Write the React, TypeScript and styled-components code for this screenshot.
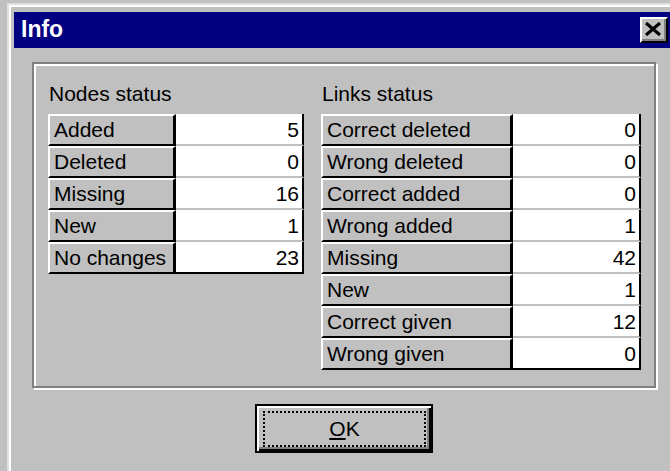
import React from "react";
import styled, { createGlobalStyle } from "styled-components";

const GlobalStyle = createGlobalStyle`
  html, body {
    margin: 0;
    padding: 0;
    background: #c0c0c0;
    overflow: hidden;
  }
  body {
    font-family: "Liberation Sans", Arial, sans-serif;
    color: #000;
  }
`;

const Window = styled.div`
  width: 670px;
  margin: 3px 0 0 7px;
  border-top: 2px solid #dfdfdf;
  border-left: 2px solid #dfdfdf;
`;

const WindowFrame = styled.div`
  border-top: 2px solid #ffffff;
  border-left: 2px solid #ffffff;
  padding: 5px 0 0 3px;
  height: 480px;
`;

const TitleBar = styled.div`
  height: 36px;
  width: 660px;
  background: #000080;
  display: flex;
  justify-content: space-between;
  align-items: flex-start;
  padding-left: 7px;
  box-sizing: border-box;
`;

const Title = styled.span`
  color: #fff;
  font-weight: bold;
  font-size: 23px;
  line-height: 34px;
`;

const CloseButton = styled.div`
  width: 28px;
  height: 26px;
  margin: 5px 6px 0 0;
  box-sizing: border-box;
  background: #c0c0c0;
  border-top: 2px solid #fff;
  border-left: 2px solid #fff;
  border-right: 2px solid #000;
  border-bottom: 2px solid #000;
  box-shadow: inset -2px -2px 0 #808080;
  display: flex;
  align-items: center;
  justify-content: center;
  padding: 0 2px 2px 0;
`;

const Client = styled.div`
  width: 660px;
  display: flex;
  flex-direction: column;
  align-items: center;
  padding-top: 14px;
`;

const GroupBox = styled.div`
  width: 624px;
  box-sizing: border-box;
  border: 2px solid #808080;
  box-shadow: 2px 2px 0 #fff, inset 2px 2px 0 #fff;
  padding: 16px 0 16px 14px;
  display: grid;
  grid-template-columns: 256px 320px;
  column-gap: 17px;
  align-items: start;
`;

const Section = styled.div`
  display: flex;
  flex-direction: column;
  gap: 6px;
`;

const SectionTitle = styled.div`
  font-size: 21px;
  line-height: 28px;
  padding-left: 1px;
`;

const StatusGrid = styled.div<{ $label: number; $value: number }>`
  display: grid;
  grid-template-columns: ${(p) => p.$label}px ${(p) => p.$value}px;
  font-size: 21px;
`;

const LabelCell = styled.div`
  background: #c0c0c0;
  border-top: 2px solid #fff;
  border-left: 2px solid #fff;
  border-bottom: 2px solid #000;
  border-right: 3px solid #000;
  padding-left: 4px;
  line-height: 28px;
  white-space: nowrap;
  overflow: hidden;
`;

const ValueCell = styled.div<{ $last: boolean }>`
  background: #fff;
  border-right: 2px solid #000;
  border-bottom: 2px solid ${(p) => (p.$last ? "#000" : "#c0c0c0")};
  padding: 2px 3px 0 0;
  line-height: 28px;
  text-align: right;
`;

const OkButton = styled.div`
  margin-top: 16px;
  width: 178px;
  height: 49px;
  box-sizing: border-box;
  border: 2px solid #000;
  background: #c0c0c0;
  box-shadow: inset 2px 2px 0 #fff, inset -2px -2px 0 #000,
    inset -4px -4px 0 #808080;
  padding: 5px 5px 4px 6px;
  display: flex;
`;

const FocusRing = styled.div`
  flex: 1;
  border: 2px dotted #000;
  display: flex;
  align-items: center;
  justify-content: center;
  font-size: 21px;
  line-height: 32px;
`;

const Mnemonic = styled.span`
  text-decoration: underline;
  text-decoration-thickness: 2px;
  text-underline-offset: 2px;
`;

type Row = [string, number];

const nodes: Row[] = [
  ["Added", 5],
  ["Deleted", 0],
  ["Missing", 16],
  ["New", 1],
  ["No changes", 23],
];

const links: Row[] = [
  ["Correct deleted", 0],
  ["Wrong deleted", 0],
  ["Correct added", 0],
  ["Wrong added", 1],
  ["Missing", 42],
  ["New", 1],
  ["Correct given", 12],
  ["Wrong given", 0],
];

function StatusTable({
  title,
  rows,
  labelWidth,
  valueWidth,
}: {
  title: string;
  rows: Row[];
  labelWidth: number;
  valueWidth: number;
}) {
  return (
    <Section>
      <SectionTitle>{title}</SectionTitle>
      <StatusGrid $label={labelWidth} $value={valueWidth}>
        {rows.map(([label, value], i) => (
          <React.Fragment key={label}>
            <LabelCell>{label}</LabelCell>
            <ValueCell $last={i === rows.length - 1}>{value}</ValueCell>
          </React.Fragment>
        ))}
      </StatusGrid>
    </Section>
  );
}

export default function App() {
  return (
    <>
      <GlobalStyle />
      <Window>
        <WindowFrame>
          <TitleBar>
            <Title>Info</Title>
            <CloseButton>
              <svg width="16" height="14" viewBox="0 0 16 14">
                <path
                  d="M1 1 L15 13 M15 1 L1 13"
                  stroke="#000"
                  strokeWidth="3.2"
                  fill="none"
                />
              </svg>
            </CloseButton>
          </TitleBar>
          <Client>
            <GroupBox>
              <StatusTable
                title="Nodes status"
                rows={nodes}
                labelWidth={128}
                valueWidth={128}
              />
              <StatusTable
                title="Links status"
                rows={links}
                labelWidth={192}
                valueWidth={128}
              />
            </GroupBox>
            <OkButton>
              <FocusRing>
                <span>
                  <Mnemonic>O</Mnemonic>K
                </span>
              </FocusRing>
            </OkButton>
          </Client>
        </WindowFrame>
      </Window>
    </>
  );
}
